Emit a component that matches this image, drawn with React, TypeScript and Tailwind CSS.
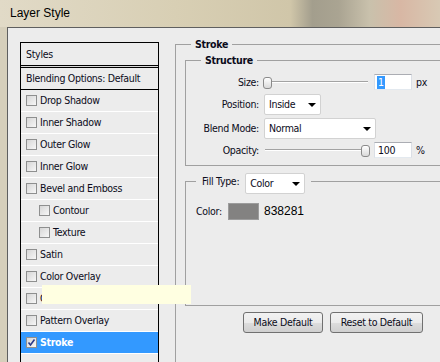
import React from "react";

type Effect = { label: string; indent?: boolean; checked?: boolean; selected?: boolean };

const effects: Effect[] = [
  { label: "Drop Shadow" },
  { label: "Inner Shadow" },
  { label: "Outer Glow" },
  { label: "Inner Glow" },
  { label: "Bevel and Emboss" },
  { label: "Contour", indent: true },
  { label: "Texture", indent: true },
  { label: "Satin" },
  { label: "Color Overlay" },
  { label: "Gradient Overlay" },
  { label: "Pattern Overlay" },
  { label: "Stroke", checked: true, selected: true },
];

function Checkbox({ checked }: { checked?: boolean }) {
  return (
    <div className="w-[11px] h-[11px] shrink-0 border border-[#8e8f8f] bg-[linear-gradient(135deg,#d6d6d6,#f7f7f7)] flex items-center justify-center">
      {checked && (
        <svg width="9" height="9" viewBox="0 0 9 9">
          <path d="M1.5 4.5 L3.5 7 L7.5 1.5" fill="none" stroke="#2a3a8c" strokeWidth="1.6" />
        </svg>
      )}
    </div>
  );
}

function Arrow() {
  return (
    <svg width="8" height="4" viewBox="0 0 8 4" className="shrink-0">
      <path d="M0 0 H8 L4 4 Z" fill="#000" />
    </svg>
  );
}

function Select({ value, width }: { value: string; width: string }) {
  return (
    <div className={`${width} h-[21px] bg-white border border-[#d2d2d2] rounded-[2px] flex items-center justify-between pl-[4px] pr-[4px]`}>
      <span>{value}</span>
      <Arrow />
    </div>
  );
}

function Slider({ thumb }: { thumb: string }) {
  return (
    <div className="relative w-[107px] h-full ml-[4px] flex items-center">
      <div className="mx-[2px] w-full h-[2px] border-t border-[#a3a3a3] border-b border-b-white" />
      <div className={`absolute ${thumb} top-[3px] w-[9px] h-[12px] rounded-[3px] border border-[#8a8a8a] bg-[linear-gradient(180deg,#ffffff,#d9d9d9)]`} />
    </div>
  );
}

function NumberBox({ children }: { children: React.ReactNode }) {
  return (
    <div className="ml-[4px] w-[38px] h-[16px] bg-white border border-[#abadb3] border-l-[#dbdfe6] border-r-[#dbdfe6] border-b-[#e3e9ef] flex items-center pl-[2px]">
      {children}
    </div>
  );
}

export default function App() {
  return (
    <div className="w-[440px] h-[362px] overflow-hidden relative bg-[#d6cfbb] text-[10.5px] leading-[13px] tracking-[-0.3px] text-[#0b0b1a] font-['DejaVu_Sans_Condensed','Liberation_Sans',sans-serif]">
      {/* title bar */}
      <div className="h-[27px] flex items-center pl-[10px] bg-[linear-gradient(90deg,#e1dac7_0%,#d8cfb4_40%,#d0c6a9_66%,#a39e8d_71%,#aaa492_77%,#c9c1ac_84%,#d8b7a4_91%,#d8c9b4_100%)]">
        <span className="text-[12px] tracking-normal text-black font-['Liberation_Sans',sans-serif]">Layer Style</span>
      </div>

      <div className="flex h-[335px]">
        <div className="w-[7px] shrink-0" />
        <div className="flex-1 bg-[#ececec] border-l border-t border-[#5f5f5f] flex pt-[10px] pl-[12px]">
          {/* styles list */}
          <div className="w-[139px] shrink-0 mt-[4px] border border-b-0 border-black flex flex-col">
            <div className="h-[23px] shrink-0 flex items-center pl-[5px] border-b border-black">Styles</div>
            <div className="h-[1px] shrink-0 bg-[#d8d8d8]" />
            <div className="h-[23px] shrink-0 flex items-center pl-[5px] border-t border-b border-black">
              Blending Options: Default
            </div>
            {effects.map((e) => (
              <div
                key={e.label}
                className={`h-[22px] shrink-0 flex items-center gap-[3px] border-b border-white ${
                  e.indent ? "pl-[18px]" : "pl-[5px]"
                } ${e.selected ? "bg-[#3399ff] text-white font-bold" : ""}`}
              >
                <Checkbox checked={e.checked} />
                <span>{e.label}</span>
              </div>
            ))}
          </div>

          {/* stroke group */}
          <fieldset className="ml-[16px] w-[300px] shrink-0 border-l border-t border-[#a0a0a0]">
            <legend className="ml-[15px] px-[4px] font-bold">Stroke</legend>

            <fieldset className="ml-[9px] mt-[3px] border-l border-t border-b border-[#a0a0a0] pb-[7px]">
              <legend className="ml-[15px] px-[4px] font-bold">Structure</legend>
              <div className="mt-[7px] h-[16px] flex items-center">
                <div className="w-[73px] text-right">Size:</div>
                <Slider thumb="left-0" />
                <NumberBox>
                  <span className="bg-[#3399ff] text-white px-[1px]">1</span>
                </NumberBox>
                <span className="ml-[4px]">px</span>
              </div>
              <div className="mt-[4px] h-[21px] flex items-center">
                <div className="w-[73px] text-right">Position:</div>
                <div className="ml-[5px]">
                  <Select value="Inside" width="w-[57px]" />
                </div>
              </div>
              <div className="mt-[3px] h-[21px] flex items-center">
                <div className="w-[73px] text-right">Blend Mode:</div>
                <div className="ml-[5px]">
                  <Select value="Normal" width="w-[112px]" />
                </div>
              </div>
              <div className="mt-[3px] h-[16px] flex items-center">
                <div className="w-[73px] text-right">Opacity:</div>
                <Slider thumb="left-[98px]" />
                <NumberBox>
                  <span className="pl-[1px]">100</span>
                </NumberBox>
                <span className="ml-[4px]">%</span>
              </div>
            </fieldset>

            <fieldset className="ml-[9px] mt-[7px] border-l border-t border-b border-[#a0a0a0] pb-[85px]">
              <legend className="ml-[10px] px-[6px] h-[17px] flex items-start gap-[6px]">
                <span className="mt-[2px]">Fill Type:</span>
                <Select value="Color" width="w-[60px]" />
              </legend>
              <div className="mt-[13px] h-[17px] flex items-center pl-[10px]">
                <span className="w-[32px]">Color:</span>
                <div className="w-[31px] h-[17px] border border-[#9c9c9c] bg-[#838281]" />
                <span className="ml-[5px] text-[12px] tracking-normal text-black font-['Liberation_Sans',sans-serif]">838281</span>
              </div>
            </fieldset>

            <div className="mt-[6px] pl-[67px] flex gap-[7px]">
              <button className="w-[80px] h-[21px] rounded-[3px] border border-[#707070] bg-[linear-gradient(180deg,#f2f2f2_0%,#ebebeb_50%,#dddddd_51%,#cfcfcf_100%)] text-[10.5px]">
                Make Default
              </button>
              <button className="w-[93px] h-[21px] rounded-[3px] border border-[#707070] bg-[linear-gradient(180deg,#f2f2f2_0%,#ebebeb_50%,#dddddd_51%,#cfcfcf_100%)] text-[10.5px]">
                Reset to Default
              </button>
            </div>
          </fieldset>
        </div>
      </div>

      {/* tooltip */}
      <div className="absolute left-[42px] top-[285px] w-[149px] h-[19px] bg-[#ffffe1]" />
    </div>
  );
}
